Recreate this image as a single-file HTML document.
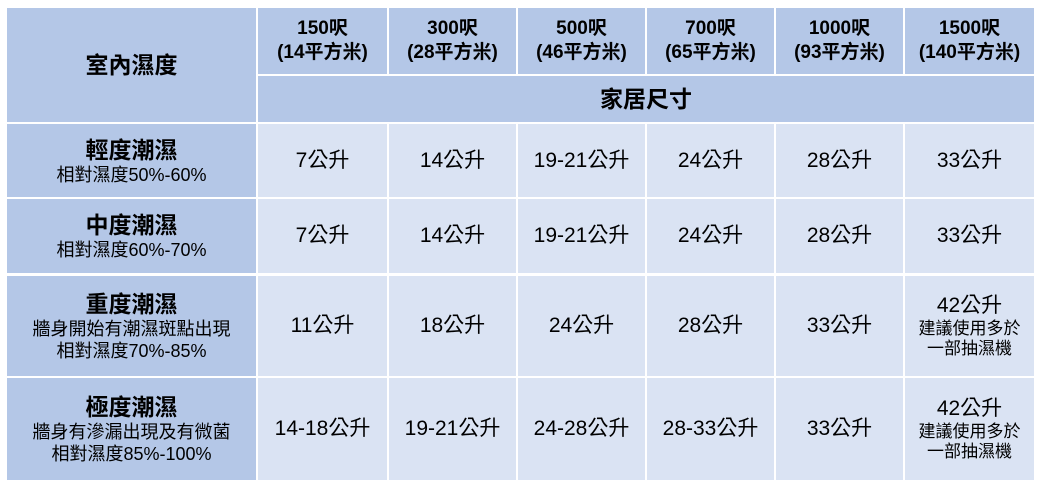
<!DOCTYPE html><html><head><meta charset="utf-8"><style>
body{margin:0;width:1041px;height:489px;background:#fff;position:relative;overflow:hidden;font-family:"Liberation Sans","Noto Sans CJK TC",sans-serif;color:#000}
.c{position:absolute;display:flex;flex-direction:column;align-items:center;justify-content:center;text-align:center;box-sizing:border-box;white-space:nowrap}
.h{background:#b4c7e7}.d{background:#dae3f3}
.t{font-size:23px;font-weight:bold;line-height:28px}
.hs{font-size:19px;font-weight:bold;line-height:24px}
.v{font-size:21px;line-height:26px}
.s{font-size:18px;line-height:22px}
.s2{font-size:17px;line-height:20px}
</style></head><body>
<div class="c h" style="left:7px;top:8px;width:249px;height:114px"><div class="t">室內濕度</div></div>
<div class="c h hs" style="left:258px;top:8px;width:129px;height:66px">150呎<br>(14平方米)</div>
<div class="c h hs" style="left:389px;top:8px;width:127px;height:66px">300呎<br>(28平方米)</div>
<div class="c h hs" style="left:518px;top:8px;width:127px;height:66px">500呎<br>(46平方米)</div>
<div class="c h hs" style="left:647px;top:8px;width:127px;height:66px">700呎<br>(65平方米)</div>
<div class="c h hs" style="left:776px;top:8px;width:127px;height:66px">1000呎<br>(93平方米)</div>
<div class="c h hs" style="left:905px;top:8px;width:129px;height:66px">1500呎<br>(140平方米)</div>
<div class="c h" style="left:258px;top:76px;width:776px;height:46px"><div class="t">家居尺寸</div></div>

<div class="c h" style="left:7px;top:124px;width:249px;height:73px"><div class="t">輕度潮濕</div><div class="s">相對濕度50%-60%</div></div>
<div class="c h" style="left:7px;top:199px;width:249px;height:74px"><div class="t">中度潮濕</div><div class="s">相對濕度60%-70%</div></div>
<div class="c h" style="left:7px;top:276px;width:249px;height:100px"><div class="t">重度潮濕</div><div class="s">牆身開始有潮濕斑點出現<br>相對濕度70%-85%</div></div>
<div class="c h" style="left:7px;top:378px;width:249px;height:102px"><div class="t">極度潮濕</div><div class="s">牆身有滲漏出現及有微菌<br>相對濕度85%-100%</div></div>

<div class="c d v" style="left:258px;top:124px;width:129px;height:73px">7公升</div>
<div class="c d v" style="left:389px;top:124px;width:127px;height:73px">14公升</div>
<div class="c d v" style="left:518px;top:124px;width:127px;height:73px">19-21公升</div>
<div class="c d v" style="left:647px;top:124px;width:127px;height:73px">24公升</div>
<div class="c d v" style="left:776px;top:124px;width:127px;height:73px">28公升</div>
<div class="c d v" style="left:905px;top:124px;width:129px;height:73px">33公升</div>

<div class="c d v" style="left:258px;top:199px;width:129px;height:74px">7公升</div>
<div class="c d v" style="left:389px;top:199px;width:127px;height:74px">14公升</div>
<div class="c d v" style="left:518px;top:199px;width:127px;height:74px">19-21公升</div>
<div class="c d v" style="left:647px;top:199px;width:127px;height:74px">24公升</div>
<div class="c d v" style="left:776px;top:199px;width:127px;height:74px">28公升</div>
<div class="c d v" style="left:905px;top:199px;width:129px;height:74px">33公升</div>

<div class="c d v" style="left:258px;top:276px;width:129px;height:100px">11公升</div>
<div class="c d v" style="left:389px;top:276px;width:127px;height:100px">18公升</div>
<div class="c d v" style="left:518px;top:276px;width:127px;height:100px">24公升</div>
<div class="c d v" style="left:647px;top:276px;width:127px;height:100px">28公升</div>
<div class="c d v" style="left:776px;top:276px;width:127px;height:100px">33公升</div>
<div class="c d" style="left:905px;top:276px;width:129px;height:100px"><div class="v">42公升</div><div class="s2">建議使用多於<br>一部抽濕機</div></div>

<div class="c d v" style="left:258px;top:378px;width:129px;height:102px">14-18公升</div>
<div class="c d v" style="left:389px;top:378px;width:127px;height:102px">19-21公升</div>
<div class="c d v" style="left:518px;top:378px;width:127px;height:102px">24-28公升</div>
<div class="c d v" style="left:647px;top:378px;width:127px;height:102px">28-33公升</div>
<div class="c d v" style="left:776px;top:378px;width:127px;height:102px">33公升</div>
<div class="c d" style="left:905px;top:378px;width:129px;height:102px"><div class="v">42公升</div><div class="s2">建議使用多於<br>一部抽濕機</div></div>
</body></html>
